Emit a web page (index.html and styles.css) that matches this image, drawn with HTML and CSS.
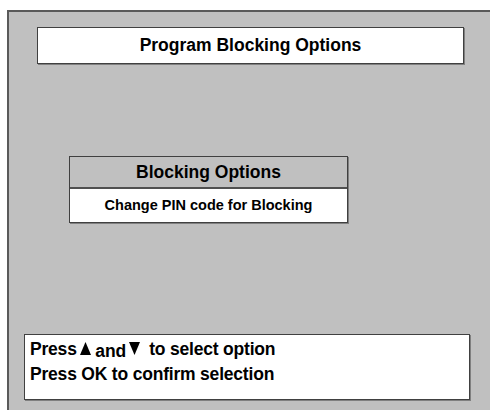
FILE: index.html
```html
<!DOCTYPE html>
<html lang="en">
<head>
    <meta charset="UTF-8">
    <title>Program Blocking Options</title>
    <link rel="stylesheet" href="styles.css">
</head>
<body>
    <div class="screen">
        <div class="title-box">Program Blocking Options</div>

        <div class="menu">
            <div class="menu-head">Blocking Options</div>
            <div class="menu-item">Change PIN code for Blocking</div>
        </div>

        <div class="help">
            <div class="help-line">Press<svg class="arrow" viewBox="0 0 11 13" width="11" height="13"><polygon points="5.5,0 11,13 0,13"/></svg> <span class="and">and</span><svg class="arrow" viewBox="0 0 11 13" width="11" height="13"><polygon points="0,0 11,0 5.5,13"/></svg> &nbsp;to select option</div>
            <div class="help-line">Press OK to confirm selection</div>
        </div>
    </div>
</body>
</html>
```

FILE: styles.css
```css
html, body {
    margin: 0;
    padding: 0;
    background: #ffffff;
    overflow: hidden;
}

body {
    font-family: "Liberation Sans", Arial, sans-serif;
    font-weight: bold;
    color: #000;
}

.screen {
    box-sizing: border-box;
    margin: 10px 0 0 7px;
    height: 400px;
    background: #c0c0c0;
    border-top: 2px solid #5a5a5a;
    border-left: 2px solid #5a5a5a;
    display: flex;
    flex-direction: column;
    align-items: flex-start;
    padding-top: 15px;
}

.title-box {
    margin-left: 28px;
    width: 425px;
    height: 35px;
    background: #fff;
    border: 1px solid #404040;
    box-shadow: 1px 1px 0 #808080;
    font-size: 17.5px;
    line-height: 35px;
    text-align: center;
}

.menu {
    margin: 92px 0 0 60px;
    width: 277px;
    border: 1px solid #404040;
    box-shadow: 1px 1px 0 #808080;
    text-align: center;
}

.menu-head {
    height: 30px;
    line-height: 31px;
    font-size: 17.5px;
    border-bottom: 2px solid #505050;
}

.menu-item {
    height: 33px;
    line-height: 33px;
    background: #fff;
    font-size: 14.5px;
}

.help {
    margin: 111px 0 0 15px;
    width: 439px;
    height: 62px;
    padding: 2px 0 0 5px;
    background: #fff;
    border: 1px solid #404040;
    box-shadow: 1px 1px 0 #808080;
    font-size: 17.5px;
    letter-spacing: -0.2px;
}

.help-line {
    height: 25px;
    line-height: 25px;
}

.arrow {
    margin-left: 3px;
    vertical-align: 0;
}

.and {
    position: relative;
    top: 2px;
}
```
